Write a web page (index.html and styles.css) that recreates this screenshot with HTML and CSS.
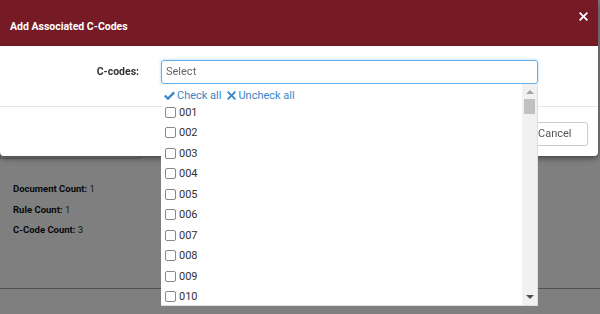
FILE: index.html
```html
<!DOCTYPE html>
<html>
<head>
<meta charset="utf-8">
<link rel="stylesheet" href="styles.css">
</head>
<body>
<div class="page">
  <div class="card"></div>
  <div class="stats">
    <p><b>Document Count:</b> 1</p>
    <p><b>Rule Count:</b> 1</p>
    <p><b>C-Code Count:</b> 3</p>
  </div>
  <hr class="rule">
</div>
<div class="backdrop"></div>
<div class="modal">
  <div class="modal-header">
    <span class="title">Add Associated C-Codes</span>
    <svg class="close" viewBox="0 0 10 10" width="9" height="9"><path d="M1.4 0 L5 3.6 L8.6 0 L10 1.4 L6.4 5 L10 8.6 L8.6 10 L5 6.4 L1.4 10 L0 8.6 L3.6 5 L0 1.4 Z" fill="#fff"/></svg>
  </div>
  <div class="modal-body">
    <label class="field-label">C-codes:</label>
    <div class="select">Select</div>
  </div>
  <div class="modal-footer">
    <button class="btn">Cancel</button>
  </div>
</div>
<div class="dropdown">
  <div class="list">
    <div class="actions">
      <span class="act"><svg class="ico" viewBox="0 0 12 10" width="11" height="10"><path d="M0 5.4 L1.8 3.6 L4.3 6.1 L10.2 0.2 L12 2 L4.3 9.7 Z" fill="#3c86c6"/></svg>Check all</span>
      <span class="act"><svg class="ico" viewBox="0 0 10 10" width="9" height="9"><path d="M1.5 0 L5 3.5 L8.5 0 L10 1.5 L6.5 5 L10 8.5 L8.5 10 L5 6.5 L1.5 10 L0 8.5 L3.5 5 L0 1.5 Z" fill="#3c86c6"/></svg>Uncheck all</span>
    </div>
    <div class="opt"><span class="cb"></span>001</div>
    <div class="opt"><span class="cb"></span>002</div>
    <div class="opt"><span class="cb"></span>003</div>
    <div class="opt"><span class="cb"></span>004</div>
    <div class="opt"><span class="cb"></span>005</div>
    <div class="opt"><span class="cb"></span>006</div>
    <div class="opt"><span class="cb"></span>007</div>
    <div class="opt"><span class="cb"></span>008</div>
    <div class="opt"><span class="cb"></span>009</div>
    <div class="opt"><span class="cb"></span>010</div>
  </div>
  <div class="scrollbar">
    <span class="arrow up"></span>
    <span class="thumb"></span>
    <span class="spacer"></span>
    <span class="arrow down"></span>
  </div>
</div>
</body>
</html>
```
FILE: styles.css
```css
html, body {
  margin: 0;
  padding: 0;
  width: 600px;
  height: 314px;
  overflow: hidden;
  font-family: "Roboto", "Noto Sans", sans-serif;
  background: #fff;
}
.page {
  width: 600px;
  height: 314px;
}
.card {
  width: 142px;
  height: 159px;
  border: 1px solid #d0d0d0;
  border-top: none;
  border-radius: 0 0 4px 0;
  box-sizing: border-box;
}
.stats {
  padding: 23px 13px 0;
  font-family: "Roboto", sans-serif;
  font-size: 9.5px;
  color: #333;
}
.stats p {
  margin: 0 0 7.5px;
  line-height: 13px;
}
.stats b {
  color: #111;
}
.rule {
  margin: 52px 0 0;
  border: none;
  border-top: 1px solid #a0a0a0;
}
.backdrop {
  position: fixed;
  inset: 0;
  background: rgba(0, 0, 0, 0.5);
}
.modal {
  position: absolute;
  top: 0;
  left: 0;
  width: 598px;
  background: #fff;
  border-radius: 0 0 4px 4px;
  box-shadow: 0 2px 6px rgba(0, 0, 0, 0.5);
}
.modal-header {
  height: 46px;
  background: #761b25;
  border-bottom: 1px solid #6a1720;
  display: flex;
  align-items: center;
  justify-content: space-between;
  padding: 0 10px 0 10px;
  box-sizing: border-box;
  color: #fff;
}
.title {
  font-family: "Roboto", sans-serif;
  font-weight: 700;
  font-size: 10.5px;
  margin-top: 8px;
}
.close {
  align-self: flex-start;
  margin-top: 12px;
  margin-right: 0;
}
.modal-body {
  height: 61px;
  box-sizing: border-box;
  padding-top: 14px;
  display: flex;
  align-items: flex-start;
  border-bottom: 1px solid #e5e5e5;
}
.field-label {
  width: 139px;
  text-align: right;
  font-family: "Roboto", sans-serif;
  font-weight: 700;
  font-size: 10.5px;
  color: #333;
  line-height: 24px;
}
.select {
  margin-left: 22px;
  width: 377px;
  height: 24px;
  box-sizing: border-box;
  border: 1px solid #66afe9;
  border-radius: 3px;
  box-shadow: 0 0 3px rgba(102, 175, 233, 0.6);
  padding-left: 4px;
  font-size: 11px;
  line-height: 22px;
  color: #666;
}
.modal-footer {
  height: 49px;
  box-sizing: border-box;
  padding-top: 4px;
  display: flex;
  justify-content: flex-end;
  align-items: center;
  padding-right: 10px;
}
.btn {
  width: 60px;
  height: 24px;
  border: 1px solid #ccc;
  border-radius: 3px;
  background: #fff;
  color: #555;
  font-family: "Roboto", sans-serif;
  font-size: 11px;
  padding: 0 0 0 9px;
  text-align: left;
}
.dropdown {
  position: absolute;
  left: 161px;
  top: 84px;
  width: 377px;
  height: 222px;
  background: #fff;
  display: flex;
  border-bottom: 1px solid #ddd;
  border-right: 1px solid #ddd;
  box-sizing: border-box;
}
.list {
  flex: 1;
  padding: 5px 0 0 3px;
  overflow: hidden;
}
.actions {
  display: flex;
  gap: 6px;
  color: #3c86c6;
  font-size: 11px;
  line-height: 14px;
  height: 13px;
}
.act {
  display: flex;
  align-items: center;
}
.ico {
  margin-right: 2px;
}
.opt {
  display: flex;
  align-items: center;
  height: 20.5px;
  font-size: 11px;
  color: #333;
  padding-left: 1px;
}
.cb {
  width: 11px;
  height: 11px;
  box-sizing: border-box;
  border: 1px solid #888;
  border-radius: 2px;
  margin-right: 3px;
}
.scrollbar {
  width: 15px;
  background: #f1f1f1;
  display: flex;
  flex-direction: column;
  align-items: center;
}
.arrow {
  width: 0;
  height: 0;
  border-left: 4px solid transparent;
  border-right: 4px solid transparent;
  margin: 6px 0;
}
.arrow.up {
  border-bottom: 4px solid #a3a3a3;
}
.arrow.down {
  border-top: 4px solid #505050;
}
.thumb {
  width: 11px;
  height: 15px;
  background: #c1c1c1;
  margin-top: -1px;
}
.spacer {
  flex: 1;
}
```
